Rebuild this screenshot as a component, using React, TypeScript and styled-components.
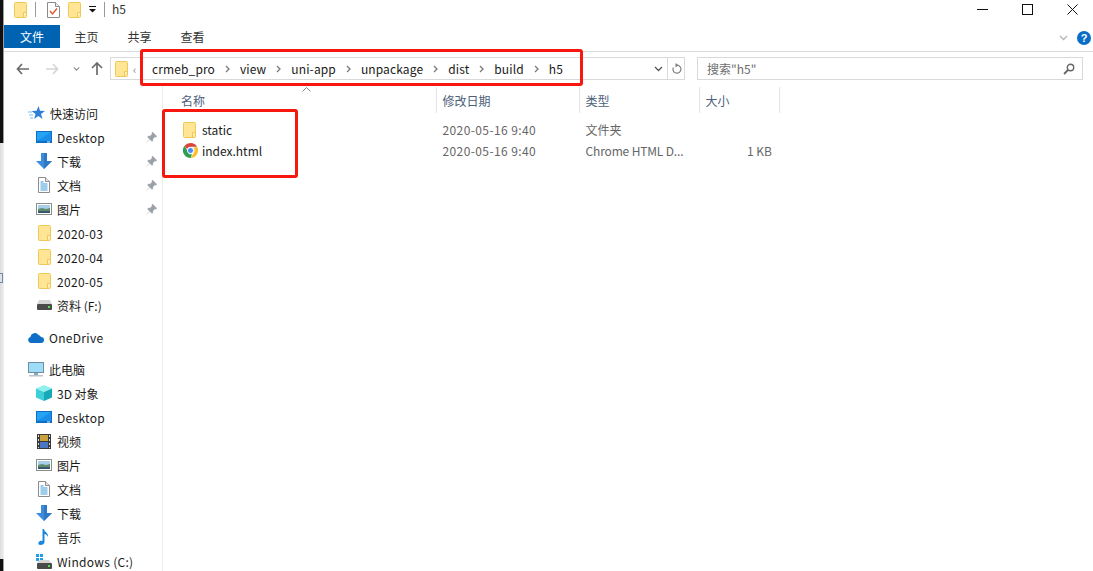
import React from 'react';
import styled, { createGlobalStyle } from 'styled-components';

const COLUMNS = '274px 143px 120px 80px';

const GlobalStyle = createGlobalStyle`
  html, body {
    margin: 0;
    padding: 0;
    height: 100%;
    overflow: hidden;
    background: #fff;
  }
  #root {
    height: 100%;
  }
  * {
    box-sizing: border-box;
  }
`;

const Frame = styled.div`
  display: flex;
  width: 1093px;
  height: 571px;
  overflow: hidden;
  font-family: 'Noto Sans CJK SC', 'Noto Sans', sans-serif;
  font-size: 12px;
  color: #1a1a1a;
  background: #fff;
`;

const EdgeStrip = styled.div`
  display: flex;
  flex-direction: column;
  flex: 0 0 4px;
  background: linear-gradient(90deg, #dcdcdc 0, #efefef 100%);
`;

const EdgeBlock = styled.div<{ $h: number }>`
  flex: 0 0 ${(p) => p.$h}px;
  background: #111;
  border-right: 1px solid #9a9a9a;
`;

const EdgeFill = styled.div`
  flex: 1;
  padding-top: 130px;
`;

const EdgeMark = styled.div`
  width: 3px;
  height: 10px;
  border: 1px solid #6f8aa6;
  border-left: 0;
`;

const Window = styled.div`
  position: relative;
  flex: 1;
  display: flex;
  flex-direction: column;
  min-width: 0;
`;

const TitleBar = styled.div`
  display: flex;
  align-items: center;
  flex: 0 0 25px;
  padding: 0 0 6px 10px;
`;

const TitleSep = styled.div`
  width: 1px;
  height: 15px;
  margin: 0 11px 0 8px;
  background: #9a9a9a;
`;

const TitleText = styled.span`
  margin: -2px 0 0 -4px;
  font-size: 12px;
  color: #333;
`;

const Spacer = styled.span<{ $w: number }>`
  flex: 0 0 ${(p) => p.$w}px;
`;

const WindowButtons = styled.div`
  display: flex;
  align-items: center;
  gap: 34px;
  margin-left: auto;
  padding-right: 15px;
`;

const RibbonTabs = styled.div`
  display: flex;
  align-items: flex-start;
  flex: 0 0 27px;
  border-bottom: 1px solid #dadbdc;
`;

const FileTab = styled.div`
  display: flex;
  align-items: center;
  justify-content: center;
  width: 56px;
  height: 23px;
  background: #0063b1;
  color: #fff;
`;

const Tab = styled.div`
  width: 53px;
  height: 23px;
  line-height: 23px;
  text-align: center;
  color: #333;
`;

const RibbonTools = styled.div`
  display: flex;
  align-items: center;
  gap: 9px;
  height: 23px;
  margin: 1px 0 0 auto;
  padding-right: 2px;
`;

const HelpBadge = styled.div`
  width: 14px;
  height: 14px;
  border-radius: 50%;
  background: #0a6ec8;
  color: #fff;
  font: bold 11px/14px 'Liberation Sans', sans-serif;
  text-align: center;
`;

const NavBar = styled.div`
  display: flex;
  align-items: center;
  flex: 0 0 34px;
  padding: 0 10px 1px 12px;
`;

const NavButtons = styled.div`
  display: flex;
  align-items: center;
  width: 94px;
`;

const AddressBox = styled.div`
  display: flex;
  align-items: center;
  width: 575px;
  height: 23px;
  border: 1px solid #d9d9d9;
  padding-left: 4px;
`;

const Overflow = styled.span`
  width: 17px;
  margin-left: 5px;
  color: #777;
  font-size: 11px;
`;

const Crumbs = styled.div`
  display: flex;
  align-items: center;
  flex: 1;
  margin-left: 2px;
`;

const Crumb = styled.span`
  color: #1a1a1a;
  letter-spacing: 0.12px;
`;

const CrumbArrow = styled.span`
  display: flex;
  justify-content: center;
  width: 25px;
`;

const AddressEnd = styled.div`
  display: flex;
  align-items: center;
  justify-content: center;
  width: 17px;
  height: 100%;
  & + & {
    border-left: 1px solid #d9d9d9;
  }
`;

const SearchBox = styled.div`
  display: flex;
  align-items: center;
  justify-content: space-between;
  width: 386px;
  height: 23px;
  margin-left: 12px;
  padding: 0 7px 0 9px;
  border: 1px solid #d9d9d9;
  color: #6d6d6d;
`;

const Body = styled.div`
  display: flex;
  flex: 1;
  min-height: 0;
`;

const Sidebar = styled.div`
  flex: 0 0 159px;
  padding-top: 15px;
  overflow: hidden;
  border-right: 1px solid #eeeeee;
`;

const NavItem = styled.div<{ $top?: boolean; $gap?: number }>`
  display: flex;
  align-items: center;
  height: 24px;
  margin-top: ${(p) => p.$gap ?? 0}px;
  padding-left: ${(p) => (p.$top ? 24 : 32)}px;
  padding-right: 5px;
  white-space: nowrap;
`;

const NavIcon = styled.span`
  display: flex;
  align-items: center;
  justify-content: center;
  flex: 0 0 16px;
  height: 16px;
  margin-right: 5px;
`;

const NavLabel = styled.span<{ $latin: boolean }>`
  letter-spacing: ${(p) => (p.$latin ? '0.3px' : '0')};
`;

const NavPin = styled.span`
  display: flex;
  margin-left: auto;
`;

const Main = styled.div`
  position: relative;
  flex: 1;
  min-width: 0;
`;

const ColumnHeader = styled.div`
  display: grid;
  grid-template-columns: ${COLUMNS};
  height: 26px;
  margin-top: 1px;
  color: #4c607a;
`;

const HeaderCell = styled.div<{ $first?: boolean }>`
  display: flex;
  align-items: center;
  padding-left: ${(p) => (p.$first ? 18 : 5.5)}px;
  border-right: 1px solid #e5e5e5;
`;

const SortCaret = styled.svg`
  position: absolute;
  left: 139px;
  top: 1px;
`;

const FileList = styled.div`
  padding-top: 6px;
`;

const FileRow = styled.div`
  display: grid;
  grid-template-columns: ${COLUMNS};
  align-items: center;
  height: 21px;
  color: #666;
`;

const NameCell = styled.div`
  display: flex;
  align-items: center;
  gap: 4px;
  padding-left: 20px;
  color: #1a1a1a;
`;

const NameGlyph = styled.span`
  display: flex;
  flex: 0 0 15px;
`;

const DetailCell = styled.div<{ $track?: number }>`
  padding-left: 5.5px;
  white-space: nowrap;
  letter-spacing: ${(p) => p.$track ?? 0}px;
`;

const SizeCell = styled.div`
  padding-right: 8px;
  text-align: right;
`;

const FlipX = styled.span`
  display: flex;
  transform: scaleX(-1);
`;

const Annotation = styled.div<{ $x: number; $y: number; $w: number; $h: number }>`
  position: absolute;
  left: ${(p) => p.$x}px;
  top: ${(p) => p.$y}px;
  width: ${(p) => p.$w}px;
  height: ${(p) => p.$h}px;
  border: 3px solid #f8170f;
  border-radius: 3px;
  pointer-events: none;
`;

const Folder = () => (
  <svg width="13" height="16" viewBox="0 0 13 16">
    <rect x="0.5" y="0.5" width="12" height="15" rx="1" fill="#ffe594" stroke="#efc957" />
    <path d="M9.5 15.5v-5h3" fill="#fff2c4" stroke="#efc957" />
  </svg>
);

const ChecklistDoc = () => (
  <svg width="13" height="16" viewBox="0 0 13 16">
    <path d="M.5.5h8l4 4v11H.5z" fill="#fff" stroke="#8a8a8a" />
    <path d="M8.5.5v4h4" fill="#eee" stroke="#8a8a8a" />
    <path d="M3 9l2.5 3L10 6.5" fill="none" stroke="#e2562b" strokeWidth="1.4" />
  </svg>
);

const DropMenuGlyph = () => (
  <svg width="7" height="7" viewBox="0 0 7 7">
    <rect y="0" width="7" height="1" fill="#111" />
    <path d="M0 3h7L3.5 6.5z" fill="#111" />
  </svg>
);

const Chevron = ({ color = '#666', w = 9 }: { color?: string; w?: number }) => (
  <svg width={w} height="6" viewBox="0 0 9 6">
    <path d="M1 1l3.5 3.5L8 1" fill="none" stroke={color} strokeWidth="1.3" />
  </svg>
);

const NavArrow = ({ color }: { color: string }) => (
  <svg width="13" height="12" viewBox="0 0 13 12">
    <path d="M6 1L1.5 6 6 11M1.5 6H13" fill="none" stroke={color} strokeWidth="1.7" />
  </svg>
);

const UpArrow = () => (
  <svg width="12" height="13" viewBox="0 0 12 13">
    <path d="M1 6l5-5 5 5M6 1v12" fill="none" stroke="#6b6b6b" strokeWidth="1.7" />
  </svg>
);

const CrumbChevron = () => (
  <svg width="5" height="8" viewBox="0 0 5 8">
    <path d="M1 1l3 3-3 3" fill="none" stroke="#7a7a7a" strokeWidth="1.3" />
  </svg>
);

const Refresh = () => (
  <svg width="11" height="12" viewBox="0 0 11 12">
    <path d="M6 2.2a4 4 0 1 1-3.7 2.4" fill="none" stroke="#7d7d7d" strokeWidth="1.2" />
    <path d="M4.5 0v4.4L7.4 2.2z" fill="#7d7d7d" />
  </svg>
);

const SearchGlyph = () => (
  <svg width="12" height="12" viewBox="0 0 12 12">
    <circle cx="7.5" cy="4.5" r="3.2" fill="none" stroke="#666" strokeWidth="1.4" />
    <path d="M5 7L1 11" stroke="#666" strokeWidth="1.8" />
  </svg>
);

const Pin = () => (
  <svg width="11" height="11" viewBox="0 0 11 11">
    <path d="M6.5 0l4.500 4.500-1.200.6-.8-.3L6.800 7l.1 1.800-1 .6L1.600 5.100l.6-1 1.800.1L6.200 2l-.3-.8zM3.500 7.500L.5 10.500" fill="#9aa0a6" stroke="#9aa0a6" strokeWidth=".4" />
  </svg>
);

const QuickStar = () => (
  <svg width="17" height="15" viewBox="0 0 17 15">
    <path d="M10.500 0l1.500 4.800 5 .1-4 3 1.500 5-4.200-3-4.200 3 1.500-5-4-3 5-.1z" fill="#2f7fd6" />
    <path d="M0 6h4M1 9h4M2 12h3" stroke="#79c3f2" strokeWidth="1.200" />
  </svg>
);

const DesktopIcon = () => (
  <svg width="16" height="12" viewBox="0 0 16 12">
    <rect width="16" height="12" fill="#0f6fc6" />
    <rect x="1" y="1" width="14" height="9" fill="#27a3f5" />
    <path d="M1 10L15 1v9z" fill="#1a8fe8" />
    <rect x="11" y="10.500" width="3" height="1" fill="#cfe8fb" />
  </svg>
);

const DownloadIcon = () => (
  <svg width="16" height="16" viewBox="0 0 16 16">
    <path d="M5 0h6v8h5l-8 8-8-8h5z" fill="#3d8bdc" />
    <path d="M8 0h3v8h5l-8 8z" fill="#2f78c8" />
  </svg>
);

const DocIcon = () => (
  <svg width="12" height="16" viewBox="0 0 12 16">
    <path d="M.5.5h7l4 4v11H.5z" fill="#fff" stroke="#8c8c8c" />
    <path d="M7.500.5v4h4" fill="#e8e8e8" stroke="#8c8c8c" />
    <path d="M2.500 5h3M2.500 7h7M2.500 9h7M2.500 11h7M2.500 13h7" stroke="#3b9bd9" />
  </svg>
);

const PictureIcon = () => (
  <svg width="16" height="12" viewBox="0 0 16 12">
    <rect x=".5" y=".5" width="15" height="11" fill="#fff" stroke="#8e8e8e" />
    <rect x="2" y="2" width="12" height="4" fill="#a9cfe8" />
    <path d="M2 6l4-1 4 1 4-1v5H2z" fill="#5f8c6a" />
    <rect x="2" y="8" width="12" height="2" fill="#38586c" />
  </svg>
);

const DriveIcon = () => (
  <svg width="15" height="10" viewBox="0 0 15 10">
    <path d="M2 0h11l2 4H0z" fill="#d5d5d5" />
    <rect y="4" width="15" height="6" rx="1" fill="#4a4a4a" />
    <rect x="11" y="6" width="2" height="2" fill="#57e04d" />
  </svg>
);

const WindowsDriveIcon = () => (
  <svg width="16" height="15" viewBox="0 0 16 15">
    <path d="M0 0h3v3H0zM4 0h3v3H4zM0 4h3v3H0zM4 4h3v3H4z" fill="#1f9fe8" />
    <path d="M3 6h10l2 3H1z" fill="#d5d5d5" />
    <rect x="1" y="9" width="15" height="6" rx="1" fill="#4a4a4a" />
    <rect x="12" y="11" width="2" height="2" fill="#57e04d" />
  </svg>
);

const CloudIcon = () => (
  <svg width="16" height="11" viewBox="0 0 16 11">
    <path d="M3 11a3 3 0 0 1-.6-5.900A4.500 4.500 0 0 1 10.500 3a3.500 3.500 0 0 1 2.500 2 3 3 0 0 1 0 6z" fill="#0f6fc6" />
  </svg>
);

const MonitorIcon = () => (
  <svg width="16" height="15" viewBox="0 0 16 15">
    <rect x=".5" y=".5" width="15" height="10" fill="#9fdcf7" stroke="#6d8fa6" />
    <rect x="6" y="11" width="4" height="2" fill="#8da6b8" />
    <rect x="1" y="13" width="14" height="1.500" fill="#b9c4cc" />
  </svg>
);

const CubeIcon = () => (
  <svg width="16" height="16" viewBox="0 0 16 16">
    <path d="M8 0l8 3.500L8 7 0 3.500z" fill="#8ff0ee" />
    <path d="M0 3.500L8 7v9l-8-3.500z" fill="#3ed0d8" />
    <path d="M16 3.500L8 7v9l8-3.500z" fill="#17a9b8" />
  </svg>
);

const FilmIcon = () => (
  <svg width="14" height="15" viewBox="0 0 14 15">
    <rect width="14" height="15" fill="#3a3a3a" />
    <rect x="3" y="1" width="8" height="6" fill="#c8a23a" />
    <rect x="3" y="8" width="8" height="6" fill="#4c76c4" />
    <path d="M1 1h1v2H1zM1 5h1v2H1zM1 9h1v2H1zM1 13h1v1H1zM12 1h1v2h-1zM12 5h1v2h-1zM12 9h1v2h-1zM12 13h1v1h-1z" fill="#ddd" />
  </svg>
);

const MusicIcon = () => (
  <svg width="12" height="16" viewBox="0 0 12 16">
    <path d="M4.500 0h1.500c.3 3 4.500 3.500 4 8-.8-2-2.500-3-3.500-3v8c0 2-2 3-4 3S0 14.500.5 13.500C1 12.200 3 11.500 4.500 12z" fill="#1b86de" />
  </svg>
);

const ChromeIcon = () => (
  <svg width="15" height="15" viewBox="0 0 16 16">
    <path d="M8 0a8 8 0 0 1 7 4H8a4 4 0 0 0-3.700 2.500L1.700 3A8 8 0 0 1 8 0z" fill="#db4437" />
    <path d="M15 4a8 8 0 0 1-6.800 12l3.200-5.600A4 4 0 0 0 11 5z" fill="#fbc02d" />
    <path d="M8.200 16A8 8 0 0 1 1.700 3l3.200 5.800A4 4 0 0 0 9.500 12z" fill="#2e9e4f" />
    <circle cx="8" cy="8" r="3.200" fill="#4a8af4" stroke="#fff" strokeWidth="1" />
  </svg>
);

const CRUMBS = ['crmeb_pro', 'view', 'uni-app', 'unpackage', 'dist', 'build', 'h5'];

type Place = { label: string; icon: React.ReactNode; top?: boolean; pinned?: boolean; gap?: number };

const PLACES: Place[] = [
  { label: '快速访问', icon: <QuickStar />, top: true },
  { label: 'Desktop', icon: <DesktopIcon />, pinned: true },
  { label: '下载', icon: <DownloadIcon />, pinned: true },
  { label: '文档', icon: <DocIcon />, pinned: true },
  { label: '图片', icon: <PictureIcon />, pinned: true },
  { label: '2020-03', icon: <Folder /> },
  { label: '2020-04', icon: <Folder /> },
  { label: '2020-05', icon: <Folder /> },
  { label: '资料 (F:)', icon: <DriveIcon /> },
  { label: 'OneDrive', icon: <CloudIcon />, top: true, gap: 8 },
  { label: '此电脑', icon: <MonitorIcon />, top: true, gap: 8 },
  { label: '3D 对象', icon: <CubeIcon /> },
  { label: 'Desktop', icon: <DesktopIcon /> },
  { label: '视频', icon: <FilmIcon /> },
  { label: '图片', icon: <PictureIcon /> },
  { label: '文档', icon: <DocIcon /> },
  { label: '下载', icon: <DownloadIcon /> },
  { label: '音乐', icon: <MusicIcon /> },
  { label: 'Windows (C:)', icon: <WindowsDriveIcon /> },
];

const isLatin = (label: string) => /^[\x20-\x7e]+$/.test(label);

const App = () => (
  <Frame>
    <GlobalStyle />
    <EdgeStrip>
      <EdgeBlock $h={143} />
      <EdgeFill>
        <EdgeMark />
      </EdgeFill>
      <EdgeBlock $h={12} />
    </EdgeStrip>
    <Window>
      <TitleBar>
        <Folder />
        <TitleSep />
        <ChecklistDoc />
        <Spacer $w={8} />
        <Folder />
        <Spacer $w={8} />
        <DropMenuGlyph />
        <TitleSep />
        <TitleText>h5</TitleText>
        <WindowButtons>
          <svg width="11" height="11" viewBox="0 0 11 11">
            <path d="M0 5.500h11" stroke="#111" />
          </svg>
          <svg width="11" height="11" viewBox="0 0 11 11">
            <rect x=".5" y=".5" width="10" height="10" fill="none" stroke="#111" />
          </svg>
          <svg width="11" height="11" viewBox="0 0 11 11">
            <path d="M.5.5l10 10M10.500.5l-10 10" stroke="#111" />
          </svg>
        </WindowButtons>
      </TitleBar>
      <RibbonTabs>
        <FileTab>文件</FileTab>
        <Tab>主页</Tab>
        <Tab>共享</Tab>
        <Tab>查看</Tab>
        <RibbonTools>
          <Chevron color="#b5b5b5" />
          <HelpBadge>?</HelpBadge>
        </RibbonTools>
      </RibbonTabs>
      <NavBar>
        <NavButtons>
          <NavArrow color="#6b6b6b" />
          <Spacer $w={17} />
          <FlipX>
            <NavArrow color="#d5d5d5" />
          </FlipX>
          <Spacer $w={14} />
          <Chevron color="#888" w={7} />
          <Spacer $w={11} />
          <UpArrow />
        </NavButtons>
        <AddressBox>
          <Folder />
          <Overflow>‹</Overflow>
          <Crumbs>
            {CRUMBS.map((name, i) => (
              <React.Fragment key={name}>
                {i > 0 && (
                  <CrumbArrow>
                    <CrumbChevron />
                  </CrumbArrow>
                )}
                <Crumb>{name}</Crumb>
              </React.Fragment>
            ))}
          </Crumbs>
          <AddressEnd>
            <Chevron color="#555" />
          </AddressEnd>
          <AddressEnd>
            <Refresh />
          </AddressEnd>
        </AddressBox>
        <SearchBox>
          <span>搜索"h5"</span>
          <SearchGlyph />
        </SearchBox>
      </NavBar>
      <Body>
        <Sidebar>
          {PLACES.map((place, i) => (
            <NavItem key={i} $top={place.top} $gap={place.gap}>
              <NavIcon>{place.icon}</NavIcon>
              <NavLabel $latin={isLatin(place.label)}>{place.label}</NavLabel>
              {place.pinned && (
                <NavPin>
                  <Pin />
                </NavPin>
              )}
            </NavItem>
          ))}
        </Sidebar>
        <Main>
          <SortCaret width="9" height="5" viewBox="0 0 9 5">
            <path d="M.5 4.500l4-4 4 4" fill="none" stroke="#888" />
          </SortCaret>
          <ColumnHeader>
            <HeaderCell $first>名称</HeaderCell>
            <HeaderCell>修改日期</HeaderCell>
            <HeaderCell>类型</HeaderCell>
            <HeaderCell>大小</HeaderCell>
          </ColumnHeader>
          <FileList>
            <FileRow>
              <NameCell>
                <NameGlyph>
                  <Folder />
                </NameGlyph>
                static
              </NameCell>
              <DetailCell $track={0.4}>2020-05-16 9:40</DetailCell>
              <DetailCell>文件夹</DetailCell>
              <SizeCell />
            </FileRow>
            <FileRow>
              <NameCell>
                <NameGlyph>
                  <ChromeIcon />
                </NameGlyph>
                index.html
              </NameCell>
              <DetailCell $track={0.4}>2020-05-16 9:40</DetailCell>
              <DetailCell $track={-0.15}>Chrome HTML D...</DetailCell>
              <SizeCell>1 KB</SizeCell>
            </FileRow>
          </FileList>
        </Main>
      </Body>
      <Annotation $x={136} $y={49} $w={443} $h={37} />
      <Annotation $x={158} $y={109} $w={136} $h={69} />
    </Window>
  </Frame>
);

export default App;
